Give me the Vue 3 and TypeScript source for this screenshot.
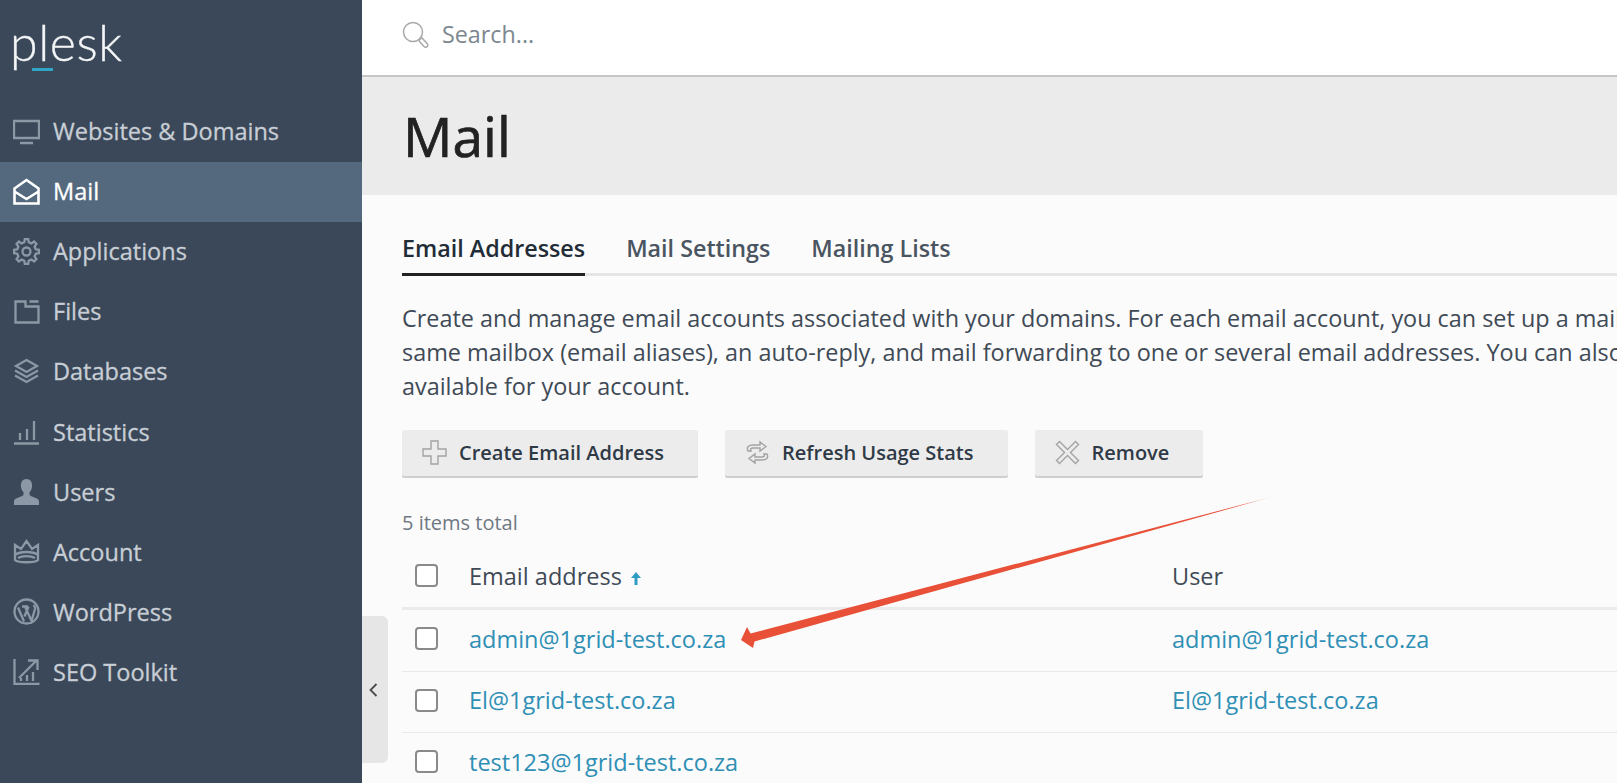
<script setup lang="ts">
interface NavItem { label: string; d: string; fill?: boolean; active?: boolean }

function gearPath(cx: number, cy: number, outer: number, inner: number, teeth: number): string {
  const pts: string[] = []
  const step = (Math.PI * 2) / teeth
  for (let i = 0; i < teeth; i++) {
    const a = i * step - Math.PI / 2
    const offs: [number, number][] = [[-0.3, inner], [-0.17, outer], [0.17, outer], [0.3, inner]]
    for (const [o, r] of offs) {
      const t = a + o * step
      pts.push(`${(cx + r * Math.cos(t)).toFixed(2)} ${(cy + r * Math.sin(t)).toFixed(2)}`)
    }
  }
  return `M${pts.join('L')}Z M${cx + 4} ${cy}a4 4 0 1 0-8 0a4 4 0 1 0 8 0Z`
}

const nav: NavItem[] = [
  { label: 'Websites & Domains', d: 'M1 3h25v17H1zM7 25h13' },
  { label: 'Mail', active: true, d: 'M1.500 10.500 13.500 2 25.500 10.500v15h-24zM1.500 13.500l12 7.500 12-7.500' },
  { label: 'Applications', d: gearPath(13.5, 13.5, 12.5, 9.5, 8) },
  { label: 'Files', d: 'M2.500 3.500h10v5h13v16h-23zM16.500 3.500h9' },
  { label: 'Databases', d: 'M13.500 2 24 8 13.500 14 3 8zM2 12.500 13.500 19 25 12.500M2 17.500 13.500 24 25 17.500' },
  { label: 'Statistics', d: 'M1 25.500h25M7 22v-7M14 22V11M21 22V3' },
  { label: 'Users', fill: true, d: 'M13.500 1c3.600 0 5.600 2.800 5.600 6.400 0 3-1.200 5.400-2.600 6.800v2.300c0 1.200 2.200 2 5 3 2.600 1 4.500 1.800 4.500 4V27H1v-3.500c0-2.200 1.900-3 4.500-4 2.800-1 5-1.800 5-3v-2.300c-1.400-1.400-2.600-3.800-2.600-6.800C7.900 3.800 9.900 1 13.500 1Z' },
  { label: 'Account', d: 'M2 7l6 4 5.500-8 5.500 8 6-4v15c-3 3-20 3-23 0zM2 17c5-4 18-4 23 0M5 20c4-2.500 13-2.500 17 0' },
  { label: 'WordPress', d: 'M13.500 1.500a12 12 0 1 0 0 24 12 12 0 0 0 0-24ZM5 9.500l6 14M9 8.500h6M12 8.500l6.500 14.500 3.500-12c.5-2-.5-3-1.500-4M15.500 8.500l-4 10' },
  { label: 'SEO Toolkit', d: 'M1.500 1v25h25M6 20 23 3M15 2.500h9.500V12M8 23v-3M14 23v-6M20 23v-9' },
]

const rows: { email: string; user: string }[] = [
  { email: 'admin@1grid-test.co.za', user: 'admin@1grid-test.co.za' },
  { email: 'El@1grid-test.co.za', user: 'El@1grid-test.co.za' },
  { email: 'test123@1grid-test.co.za', user: '' },
]

const tabs = ['Email Addresses', 'Mail Settings', 'Mailing Lists']

const buttons: { label: string; d: string }[] = [
  { label: 'Create Email Address', d: 'M9 1h7v8h8v7h-8v8H9v-8H1V9h8z' },
  { label: 'Refresh Usage Stats', d: 'M3 11C1 7 4 5 8 5h7V2l6 4.500L15 11V8H8C6 8 5 9 6 11ZM22 14c2 4-1 6-5 6h-7v3l-6-4.500L10 14v3h7c2 0 3-1 2-3Z' },
  { label: 'Remove', d: 'M4.500 1.500 12.500 9.500 20.500 1.500 23.500 4.500 15.500 12.500 23.500 20.500 20.500 23.500 12.500 15.500 4.500 23.500 1.500 20.500 9.500 12.500 1.500 4.500z' },
]
</script>

<template>
  <div class="app">
    <aside class="sidebar">
      <div class="logo">
        <span class="logo-text">plesk</span>
        <span class="logo-bar"></span>
      </div>
      <nav class="nav">
        <a v-for="item in nav" :key="item.label" class="nav-item" :class="{ active: item.active }">
          <svg class="nav-icon" :class="{ filled: item.fill }" viewBox="0 0 27 27"><path :d="item.d" /></svg>
          <span>{{ item.label }}</span>
        </a>
      </nav>
    </aside>

    <div class="main">
      <header class="topbar">
        <svg class="search-icon" viewBox="0 0 27 27"><circle cx="11" cy="11" r="9.500" /><path d="M18 18l2-1 5.500 6q1 2-1 3-1.500.5-2.500-.5L17 20z" /></svg>
        <span class="search-text">Search...</span>
      </header>

      <div class="title-bar"><h1>Mail</h1></div>

      <section class="content">
        <div class="tabs">
          <a v-for="(t, i) in tabs" :key="t" class="tab" :class="{ current: i === 0 }">{{ t }}</a>
        </div>

        <p class="desc">
          <span>Create and manage email accounts associated with your domains. For each email account, you can set up a mailbox</span>
          <span>same mailbox (email aliases), an auto-reply, and mail forwarding to one or several email addresses. You can also</span>
          <span>available for your account.</span>
        </p>

        <div class="toolbar">
          <button v-for="b in buttons" :key="b.label" class="btn" type="button">
            <svg class="btn-icon" viewBox="0 0 25 25"><path :d="b.d" /></svg>
            <span>{{ b.label }}</span>
          </button>
        </div>

        <div class="total">5 items total</div>

        <div class="table">
          <div class="tr head">
            <span class="check"></span>
            <span class="cell first">Email address
              <svg class="sort" viewBox="0 0 10 13"><path d="M5 0 10 6H6.500V13H3.500V6H0z" /></svg>
            </span>
            <span class="cell">User</span>
          </div>
          <div v-for="r in rows" :key="r.email" class="tr">
            <span class="check"></span>
            <a class="cell first link">{{ r.email }}</a>
            <a class="cell link">{{ r.user }}</a>
          </div>
        </div>
      </section>

      <div class="collapse">
        <svg viewBox="0 0 9 14"><path d="M7.500 1 1.500 7l6 6" /></svg>
      </div>

      <svg class="annotation" viewBox="0 0 560 170">
        <defs>
          <linearGradient id="fade" x1="1" y1="0" x2="0" y2="0">
            <stop offset="0" stop-color="#e85038" stop-opacity="0.2" />
            <stop offset="0.06" stop-color="#e85038" />
            <stop offset="1" stop-color="#e85038" />
          </linearGradient>
        </defs>
        <path fill="url(#fade)" d="M539 1 14.500 138.500 11 132 5 145 17 153 18.500 146.500Z" />
      </svg>
    </div>
  </div>
</template>

<style>
html, body { margin: 0; height: 100%; overflow: hidden; background: #fbfbfb; }
</style>

<style scoped>
.app {
  display: flex;
  height: 783px;
  overflow: hidden;
  font-family: "Open Sans", "Liberation Sans", sans-serif;
}
.sidebar {
  flex: 0 0 362px;
  background: #3a4859;
  color: #c8ced5;
}
.logo {
  position: relative;
  height: 102px;
  padding-left: 10px;
}
.logo-text {
  display: block;
  padding-top: 12px;
  font-family: Lato, "Open Sans", sans-serif;
  font-weight: 300;
  font-size: 50px;
  line-height: 60px;
  letter-spacing: 0.6px;
  color: #f3f5f6;
  -webkit-text-stroke: 0.3px;
}
.logo-bar {
  position: absolute;
  left: 32px;
  top: 68px;
  width: 21px;
  height: 3px;
  background: #2fa5c4;
}
.nav-item {
  display: flex;
  align-items: center;
  height: 60.100px;
  box-sizing: border-box;
  padding: 0 0 2px 13px;
  font-size: 23.500px;
  -webkit-text-stroke: 0.3px;
}
.nav-item.active { background: #54697d; color: #fff; }
.nav-icon {
  flex: none;
  width: 27px;
  height: 27px;
  margin-right: 13px;
  fill: none;
  stroke: #8c98a5;
  stroke-width: 2.300;
}
.nav-icon.filled { fill: #8c98a5; stroke: none; }
.nav-item.active .nav-icon { stroke: #fff; stroke-width: 2.600; }

.main {
  position: relative;
  flex: 1;
  min-width: 0;
  overflow: hidden;
  background: #fbfbfb;
}
.topbar {
  display: flex;
  align-items: center;
  height: 77px;
  box-sizing: border-box;
  padding: 0 0 7px 40px;
  background: #fff;
  border-bottom: 2px solid #c6c6c6;
}
.search-icon {
  width: 27px;
  height: 27px;
  margin-right: 13px;
  fill: none;
  stroke: #a9a9a9;
  stroke-width: 1.500;
}
.search-text { font-size: 23.300px; color: #7d8790; }
.title-bar {
  height: 118px;
  padding-left: 41px;
  background: #ebebeb;
}
.title-bar h1 {
  margin: 0;
  font-weight: 400;
  font-size: 55px;
  line-height: 118px;
  color: #222;
  -webkit-text-stroke: 0.7px;
}
.content { padding: 0 0 0 40px; color: #3f4a56; }
.tabs {
  display: flex;
  gap: 41px;
  height: 81px;
  box-sizing: border-box;
  border-bottom: 3px solid #e6e6e6;
  align-items: flex-end;
}
.tab {
  height: 56px;
  margin-bottom: -3px;
  box-sizing: border-box;
  font-weight: 600;
  font-size: 23.300px;
  line-height: 56px;
  color: #4a5561;
}
.tab.current { color: #222c36; border-bottom: 3px solid #222; }
.desc {
  margin: 25px 0 0;
  font-size: 23.400px;
  line-height: 34px;
  white-space: nowrap;
}
.desc span { display: block; }
.toolbar { display: flex; gap: 27px; margin-top: 27px; }
.btn {
  display: flex;
  align-items: center;
  height: 46px;
  padding: 0 34px 2px 20px;
  border: 0;
  border-radius: 2px;
  background: #ececec;
  box-shadow: 0 2px 0 #cfcfcf;
  font: 600 20px "Open Sans", sans-serif;
  color: #2f3a46;
}
.btn-icon {
  width: 25px;
  height: 25px;
  margin-right: 12px;
  fill: none;
  stroke: #a3a3a3;
  stroke-width: 1.400;
}
.total { margin-top: 35px; font-size: 20px; line-height: 24px; color: #6e7882; }
.tr {
  display: flex;
  align-items: center;
  height: 61.500px;
  padding-bottom: 3.500px;
  border-bottom: 1px solid #e9e9e9;
  box-sizing: border-box;
  font-size: 23.500px;
}
.tr.head { height: 68px; margin-top: 7px; padding: 2px 0 0; border-bottom-width: 3px; border-bottom-color: #ebebeb; }
.check {
  flex: none;
  width: 23px;
  height: 23px;
  margin: 0 31px 0 13px;
  box-sizing: border-box;
  border: 2px solid #8a8a8a;
  border-radius: 4px;
  background: #fff;
}
.cell.first { flex: 0 0 703px; }
.link { color: #2f8fb5; }
.sort { width: 10px; height: 13px; margin-left: 3px; fill: #2f9cc4; }
.collapse {
  position: absolute;
  left: 0;
  top: 616px;
  display: flex;
  align-items: center;
  justify-content: center;
  width: 26px;
  height: 147px;
  padding-right: 4px;
  box-sizing: border-box;
  border-radius: 0 6px 6px 0;
  background: #e6e6e6;
}
.collapse svg { width: 9px; height: 14px; fill: none; stroke: #4a4a4a; stroke-width: 1.800; }
.annotation {
  position: absolute;
  left: 374px;
  top: 495px;
  width: 560px;
  height: 170px;
  pointer-events: none;
}
</style>
